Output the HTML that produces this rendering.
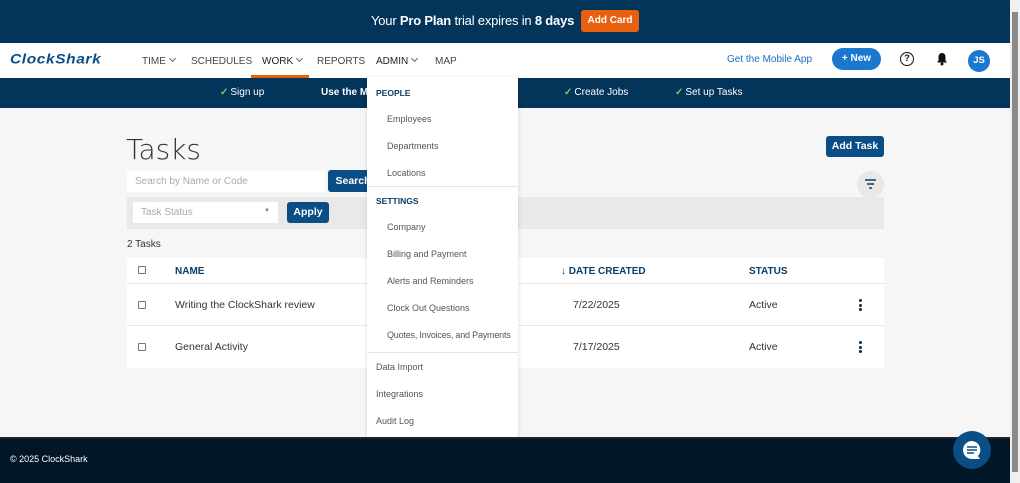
<!DOCTYPE html>
<html><head><style>
*{box-sizing:border-box;margin:0;padding:0}
body{width:1020px;height:483px;overflow:hidden;background:#f6f6f6;font-family:"Liberation Sans",sans-serif;position:relative;color:#333}
.abs{position:absolute}
.top{left:0;top:0;width:1010px;height:43px;background:#03345a;color:#fff;font-size:13px}
.nav{left:0;top:43px;width:1010px;height:35px;background:#fff}
.nav span{position:absolute;top:13px;font-size:10px;color:#444}
.ob{left:0;top:78px;width:1010px;height:30px;background:#03345a;color:#fff;font-size:10px}
.ob span{position:absolute;top:9px}
.ck{color:#7fc75a;margin-right:2px}
.menu{left:367px;top:77px;width:151px;height:360px;background:#fff;box-shadow:0 1px 4px rgba(0,0,0,.15)}
.menu div{position:absolute;font-size:9px;color:#555}
.menu .h{font-weight:bold;color:#0b3d66;font-size:8.5px;left:9px}
.menu .i{left:20px}
.menu .t{left:9px}
.sep{position:absolute;left:0;width:151px;height:1px;background:#e5e5e5}
.btn{background:#0b4d85;color:#fff;font-weight:bold;font-size:10.5px;border-radius:3px;text-align:center}
.tbl{left:127px;top:258px;width:757px;height:110px;background:#fff}
.cb{position:absolute;width:8px;height:8px;border:1px solid #777;border-radius:1px}
.row{position:absolute;left:0;width:757px;height:1px;background:#e8e8e8}
.hd{position:absolute;top:8px;font-weight:bold;font-size:10px;color:#0b3d66}
.cell{position:absolute;font-size:10.5px;color:#333}
.dots{position:absolute;left:732px;width:3px}
.dots i{display:block;width:3px;height:3px;background:#0b2a48;border-radius:50%;margin-bottom:1.5px}
.chev{display:inline-block;width:5px;height:5px;border-right:1px solid #666;border-bottom:1px solid #666;transform:rotate(45deg);margin-left:4px;position:relative;top:-3px}
</style></head><body>
<div class="abs top">
 <div class="abs" style="left:371px;top:13px;width:205px;white-space:nowrap;letter-spacing:-0.2px">Your <b>Pro Plan</b> trial expires in <b>8 days</b></div>
 <div class="abs" style="left:581px;top:10px;width:58px;height:22px;background:#e8600f;border-radius:3px;font-size:10px;font-weight:bold;text-align:center;line-height:22px">Add Card</div>
</div>
<div class="abs nav">
 <div class="abs" style="left:10px;top:8px;font-size:15.5px;font-weight:bold;font-style:italic;color:#0b4d85;letter-spacing:0.6px;transform:scaleY(0.9)">ClockShark</div>
 <span style="left:142px">TIME<i class="chev"></i></span>
 <span style="left:191px">SCHEDULES</span>
 <span style="left:262px;color:#222">WORK<i class="chev"></i></span>
 <div class="abs" style="left:251px;top:32px;width:58px;height:3px;background:#e8600f"></div>
 <span style="left:317px">REPORTS</span>
 <span style="left:376px;color:#222">ADMIN<i class="chev"></i></span>
 <span style="left:435px">MAP</span>
 <span style="left:727px;color:#1a6fc0;font-size:10px;top:11px">Get the Mobile App</span>
 <div class="abs" style="left:832px;top:5px;width:49px;height:22px;background:#1a78cf;border-radius:11px;color:#fff;font-size:10px;font-weight:bold;text-align:center;line-height:22px">+ New</div>
 <div class="abs" style="left:900px;top:9px;width:14px;height:14px;border:1.5px solid #111;border-radius:50%;font-size:9px;font-weight:bold;text-align:center;line-height:11px;color:#111">?</div>
 <svg class="abs" style="left:936px;top:9px" width="12" height="14" viewBox="0 0 12 14"><path d="M6 1C3.5 1 2.5 3 2.5 5v3.5L1 10.5h10L9.5 8.5V5C9.5 3 8.5 1 6 1z" fill="#111"/><circle cx="6" cy="12" r="1.5" fill="#111"/></svg>
 <div class="abs" style="left:968px;top:7px;width:22px;height:22px;background:#1a78cf;border-radius:50%;color:#fff;font-size:9.5px;font-weight:bold;text-align:center;line-height:22px">JS</div>
</div>
<div class="abs ob">
 <span style="left:220px"><b class="ck">✓</b>Sign up</span>
 <span style="left:321px;font-weight:bold">Use the M</span>
 <span style="left:564px"><b class="ck">✓</b>Create Jobs</span>
 <span style="left:675px"><b class="ck">✓</b>Set up Tasks</span>
</div>
<div class="abs" style="left:126px;top:133px;font-size:28px;color:#333;font-family:'DejaVu Sans',sans-serif;font-weight:300">Tasks</div>
<div class="abs btn" style="left:826px;top:136px;width:58px;height:21px;line-height:21px">Add Task</div>
<div class="abs" style="left:127px;top:171px;width:198px;height:21px;background:#fff;border-radius:2px;font-size:10px;color:#aaa;padding:5px 8px">Search by Name or Code</div>
<div class="abs btn" style="left:328px;top:170px;width:50px;height:22px;line-height:22px">Search</div>
<div class="abs" style="left:857px;top:171px;width:27px;height:27px;border-radius:50%;background:#e8e8e8"></div>
<svg class="abs" style="left:864px;top:178px" width="13" height="12"><path d="M1 2h11M3 6h7M5 10h3" stroke="#0b3d66" stroke-width="1.5"/></svg>
<div class="abs" style="left:127px;top:197px;width:757px;height:32px;background:#e9e9e9"></div>
<div class="abs" style="left:133px;top:202px;width:145px;height:21px;background:#fff;font-size:10px;color:#aaa;padding:5px 8px">Task Status<span style="position:absolute;right:8px;top:6px;font-size:6px;color:#777">▼</span></div>
<div class="abs btn" style="left:287px;top:202px;width:42px;height:21px;line-height:21px">Apply</div>
<div class="abs" style="left:127px;top:239px;font-size:10px">2 Tasks</div>
<div class="abs tbl">
 <div class="cb" style="left:11px;top:8px"></div>
 <div class="hd" style="left:48px">NAME</div>
 <div class="hd" style="left:434px">↓ DATE CREATED</div>
 <div class="hd" style="left:622px">STATUS</div>
 <div class="row" style="top:25px"></div>
 <div class="cb" style="left:11px;top:43px"></div>
 <div class="cell" style="left:48px;top:41px">Writing the ClockShark review</div>
 <div class="cell" style="left:446px;top:41px">7/22/2025</div>
 <div class="cell" style="left:622px;top:41px">Active</div>
 <div class="dots" style="top:41px"><i></i><i></i><i></i></div>
 <div class="row" style="top:67px"></div>
 <div class="cb" style="left:11px;top:85px"></div>
 <div class="cell" style="left:48px;top:83px">General Activity</div>
 <div class="cell" style="left:446px;top:83px">7/17/2025</div>
 <div class="cell" style="left:622px;top:83px">Active</div>
 <div class="dots" style="top:83px"><i></i><i></i><i></i></div>
</div>
<div class="abs menu">
 <div class="h" style="top:11px">PEOPLE</div>
 <div class="i" style="top:37px">Employees</div>
 <div class="i" style="top:64px">Departments</div>
 <div class="i" style="top:91px">Locations</div>
 <div class="sep" style="top:109px"></div>
 <div class="h" style="top:119px">SETTINGS</div>
 <div class="i" style="top:145px">Company</div>
 <div class="i" style="top:172px">Billing and Payment</div>
 <div class="i" style="top:199px">Alerts and Reminders</div>
 <div class="i" style="top:226px">Clock Out Questions</div>
 <div class="i" style="top:253px;letter-spacing:-0.2px">Quotes, Invoices, and Payments</div>
 <div class="sep" style="top:275px"></div>
 <div class="t" style="top:285px">Data Import</div>
 <div class="t" style="top:312px">Integrations</div>
 <div class="t" style="top:339px">Audit Log</div>
</div>
<div class="abs" style="left:0;top:437px;width:1010px;height:46px;background:#011627;border-top:2px solid #222"></div>
<div class="abs" style="left:10px;top:454px;font-size:9px;color:#fff">© 2025 ClockShark</div>
<div class="abs" style="left:953px;top:431px;width:38px;height:38px;border-radius:50%;background:#0b4d85"></div>
<svg class="abs" style="left:961px;top:439px" width="22" height="22" viewBox="0 0 22 22"><path d="M11 2a9 9 0 1 0 0 18h8l-2-3A9 9 0 0 0 11 2z" fill="#fff"/><path d="M6 8h10M6 11h10M6 14h7" stroke="#0b4d85" stroke-width="1.5"/></svg>
<div class="abs" style="left:1010px;top:0;width:10px;height:483px;background:#f0f0f0"></div>
<div class="abs" style="left:1012px;top:12px;width:6px;height:460px;background:#8a8a8a"></div>
</body></html>
